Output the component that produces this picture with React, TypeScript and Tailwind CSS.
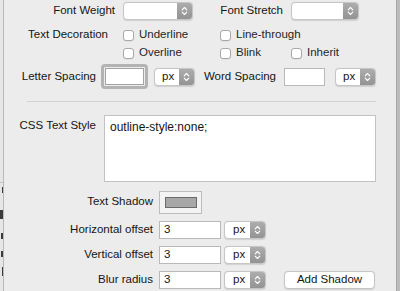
import React from "react";

const font = { fontFamily: '"Liberation Sans", Arial, sans-serif' };

function Stepper() {
  return (
    <div className="flex w-[15px] shrink-0 items-center justify-center bg-gradient-to-b from-[#adadad] to-[#939393]">
      <svg width="7" height="10" viewBox="0 0 7 10" fill="none" stroke="white" strokeWidth="1.1" strokeLinecap="round" strokeLinejoin="round">
        <path d="M1.2 3.8 L3.5 1.5 L5.8 3.8" />
        <path d="M1.2 6.2 L3.5 8.5 L5.8 6.2" />
      </svg>
    </div>
  );
}

function Popup({ className, text, pad = "pl-[7px]" }: { className: string; text?: string; pad?: string }) {
  return (
    <div className={`flex h-[18px] overflow-hidden rounded-[4px] border border-[#c6c6c6] bg-white shadow-[0_0.5px_1px_rgba(0,0,0,0.12)] ${className}`}>
      <div className={`flex flex-1 items-center leading-none ${pad}`}>{text}</div>
      <Stepper />
    </div>
  );
}

function Check({ label, className }: { label: string; className: string }) {
  return (
    <div className={`flex items-center ${className}`}>
      <div className="h-[11px] w-[11px] rounded-[3px] border border-[#a9a9a9] bg-white shadow-[0_0.5px_0.5px_rgba(0,0,0,0.1)]" />
      <span className="ml-[5px] text-[#262626]">{label}</span>
    </div>
  );
}

function Label({ className, children }: { className: string; children: React.ReactNode }) {
  return <div className={`shrink-0 text-right ${className}`}>{children}</div>;
}

function ShadowRow({ label, mt, button }: { label: string; mt: string; button?: boolean }) {
  return (
    <div className={`flex h-[18px] items-center ${mt}`}>
      <Label className="w-[153px]">{label}</Label>
      <div className="ml-[6px] flex h-[18px] w-[62px] items-center border border-[#b9b9b9] bg-white pl-[4px]">3</div>
      <Popup className="ml-[3px] w-[42px]" text="px" pad="pl-[8px]" />
      {button && (
        <div className="ml-[18px] flex h-[18px] w-[91px] items-center justify-center rounded-[4px] border border-[#c6c6c6] bg-white shadow-[0_0.5px_1px_rgba(0,0,0,0.12)]">
          Add Shadow
        </div>
      )}
    </div>
  );
}

// clipped glyph edges of the window sitting behind, only ~3px visible
const peek = [
  { h: "h-[6px]", w: "w-[1px]", mt: "mt-[4px]" },
  { h: "h-[9px]", w: "w-[3px]", mt: "mt-[17px]" },
  { h: "h-[6px]", w: "w-[2px]", mt: "mt-[14px]" },
  { h: "h-[6px]", w: "w-[2px]", mt: "mt-[12px]" },
  { h: "h-[9px]", w: "w-[1px]", mt: "mt-[10px]" },
];

export default function App() {
  return (
    <div className="relative h-[291px] w-[400px] overflow-hidden bg-[#ececec] text-[11.5px] text-[#151515]" style={font}>
      {/* window behind, peeking on the left */}
      <div className="absolute left-0 top-0 flex h-full w-[4px] flex-col border-r border-[#b9b9b9] bg-[#e6e6e6]">
        <div className="h-[182px] shrink-0" />
        <div className="h-px shrink-0 bg-[#c4c4c4]" />
        <div className="flex flex-col items-end">
          {peek.map((p, i) => (
            <div key={i} className={`${p.h} ${p.w} ${p.mt} bg-[#3a3a3a]`} />
          ))}
        </div>
      </div>
      {/* neighbouring pane edge */}
      <div className="absolute right-0 top-0 h-full w-[4px] border-l border-[#a6a6a6] bg-[#bcbcbc]" />

      <div className="flex flex-col">
        {/* Font weight / stretch */}
        <div className="mt-[2px] flex h-[18px] items-center">
          <Label className="w-[115px]">Font Weight</Label>
          <Popup className="ml-[8px] w-[70px]" />
          <Label className="w-[90px]">Font Stretch</Label>
          <Popup className="ml-[8px] w-[68px]" />
        </div>

        {/* Text decoration */}
        <div className="mt-[6px] flex h-[18px] items-center">
          <Label className="w-[108px]">Text Decoration</Label>
          <Check label="Underline" className="ml-[15px] w-[97px]" />
          <Check label="Line-through" className="w-[100px]" />
        </div>
        <div className="flex h-[18px] items-center pl-[123px]">
          <Check label="Overline" className="w-[97px]" />
          <Check label="Blink" className="w-[71px]" />
          <Check label="Inherit" className="" />
        </div>

        {/* Spacing */}
        <div className="mt-[2px] flex h-[25px] items-center">
          <Label className="w-[96px]">Letter Spacing</Label>
          <div className="ml-[5px] h-[25px] w-[47px] rounded-[4px] border-[3px] border-[#b3b3b3] p-px">
            <div className="h-full w-full border border-[#a3a3a3] bg-white" />
          </div>
          <Popup className="ml-[6px] w-[41px]" text="px" />
          <Label className="w-[81px]">Word Spacing</Label>
          <div className="ml-[8px] h-[18px] w-[41px] border border-[#b9b9b9] bg-white" />
          <Popup className="ml-[10px] w-[41px]" text="px" />
        </div>

        <div className="ml-[27px] mt-[12px] h-px w-[349px] bg-[#d3d3d3]" />

        {/* CSS text style */}
        <div className="mt-[13px] flex">
          <Label className="w-[96px] pt-[2px]">CSS Text Style</Label>
          <div className="ml-[8px] h-[67px] w-[272px] border border-[#c2c2c2] bg-white pl-[5px] pt-[2px] text-[12px]">
            outline-style:none;
          </div>
        </div>

        {/* Text shadow */}
        <div className="mt-[9px] flex h-[22px] items-center">
          <Label className="w-[153px]">Text Shadow</Label>
          <div className="ml-[6px] flex h-[23px] w-[43px] items-center justify-center border border-[#bcbcbc] bg-[#f3f3f3]">
            <div className="h-[11px] w-[32px] border-[1.5px] border-[#6a6a6a] bg-[#a7a7a7]" />
          </div>
        </div>

        <ShadowRow label="Horizontal offset" mt="mt-[8px]" />
        <ShadowRow label="Vertical offset" mt="mt-[7px]" />
        <ShadowRow label="Blur radius" mt="mt-[7px]" button />
      </div>
    </div>
  );
}
